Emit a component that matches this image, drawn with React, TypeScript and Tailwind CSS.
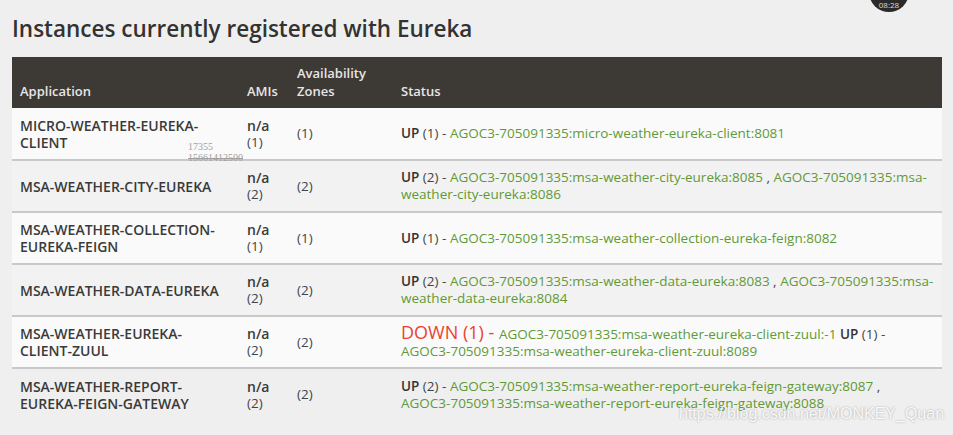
import React from 'react'

const GREEN = 'text-[#5f9a36]'

type Row = {
  app: string[]
  amis: string
  zones: string
  status: React.ReactNode
}

function Up({ n }: { n: number }) {
  return (
    <>
      <b className="font-semibold text-[#333]">UP</b> ({n}) -{' '}
    </>
  )
}

const rows: Row[] = [
  {
    app: ['MICRO-WEATHER-EUREKA-', 'CLIENT'],
    amis: '(1)',
    zones: '(1)',
    status: (
      <>
        <Up n={1} />
        <span className={GREEN}>AGOC3-705091335:micro-weather-eureka-client:8081</span>
      </>
    ),
  },
  {
    app: ['MSA-WEATHER-CITY-EUREKA'],
    amis: '(2)',
    zones: '(2)',
    status: (
      <>
        <Up n={2} />
        <span className={GREEN}>AGOC3-705091335:msa-weather-city-eureka:8085</span> ,{' '}
        <span className={GREEN}>AGOC3-705091335:msa-weather-city-eureka:8086</span>
      </>
    ),
  },
  {
    app: ['MSA-WEATHER-COLLECTION-', 'EUREKA-FEIGN'],
    amis: '(1)',
    zones: '(1)',
    status: (
      <>
        <Up n={1} />
        <span className={GREEN}>AGOC3-705091335:msa-weather-collection-eureka-feign:8082</span>
      </>
    ),
  },
  {
    app: ['MSA-WEATHER-DATA-EUREKA'],
    amis: '(2)',
    zones: '(2)',
    status: (
      <>
        <Up n={2} />
        <span className={GREEN}>AGOC3-705091335:msa-weather-data-eureka:8083</span> ,{' '}
        <span className={GREEN}>AGOC3-705091335:msa-weather-data-eureka:8084</span>
      </>
    ),
  },
  {
    app: ['MSA-WEATHER-EUREKA-', 'CLIENT-ZUUL'],
    amis: '(2)',
    zones: '(2)',
    status: (
      <>
        <span className="text-[18px] leading-[17px] text-[#e8432e]">DOWN (1) - </span>
        <span className={GREEN}>AGOC3-705091335:msa-weather-eureka-client-zuul:-1</span>{' '}
        <Up n={1} />
        <span className={GREEN}>AGOC3-705091335:msa-weather-eureka-client-zuul:8089</span>
      </>
    ),
  },
  {
    app: ['MSA-WEATHER-REPORT-', 'EUREKA-FEIGN-GATEWAY'],
    amis: '(2)',
    zones: '(2)',
    status: (
      <>
        <Up n={2} />
        <span className={GREEN}>AGOC3-705091335:msa-weather-report-eureka-feign-gateway:8087</span> ,{' '}
        <span className={GREEN + ' whitespace-nowrap'}>
          AGOC3-705091335:msa-weather-report-eureka-feign-gateway:8088
        </span>
      </>
    ),
  },
]

export default function App() {
  return (
    <div
      className="relative h-[435px] w-[953px] overflow-hidden bg-[#efefef] text-[13.5px] text-[#444]"
      style={{ fontFamily: '"Open Sans", "Liberation Sans", sans-serif' }}
    >
      {/* timer badge */}
      <div className="absolute left-[869px] top-[-28px] flex h-[40px] w-[40px] items-end justify-center rounded-full bg-[#2a2a2a] pb-[2px] text-[8px] leading-[10px] text-[#ddd]">
        08:28
      </div>

      <h1 className="px-3 pt-[16px] text-[22.5px] font-semibold leading-[26px] text-[#333]">
        Instances currently registered with Eureka
      </h1>

      <table className="ml-3 mt-[15px] w-[930px] border-collapse">
        <thead>
          <tr className="h-[51px] bg-[#3d3934] text-left align-bottom text-[13px] leading-[18px] text-[#e6e6e6]">
            <th className="w-[227px] px-2 pb-[8px] font-semibold">Application</th>
            <th className="w-[50px] px-2 pb-[8px] font-semibold">AMIs</th>
            <th className="w-[104px] px-2 pb-[8px] font-semibold">
              Availability
              <br />
              Zones
            </th>
            <th className="px-2 pb-[8px] font-semibold">Status</th>
          </tr>
        </thead>
        <tbody>
          {rows.map((r, i) => (
            <tr
              key={i}
              className={
                'h-[52px] align-middle leading-[17px] ' +
                (i === 5
                  ? 'bg-[#efefef]'
                  : i % 2 === 0
                    ? 'border-b-2 border-[#c9c9c9] bg-[#fafafa]'
                    : 'border-b-2 border-[#c9c9c9] bg-[#f2f2f2]')
              }
            >
              <td className="px-2 text-[14px] font-semibold text-[#3a3a3a]">
                {r.app.map((l, k) => (
                  <div key={k}>{l}</div>
                ))}
              </td>
              <td className="px-2">
                <div className="text-[14px] font-semibold text-[#3a3a3a]">n/a</div>
                <div>{r.amis}</div>
              </td>
              <td className="px-2">{r.zones}</td>
              <td className="pl-2 pr-1">{r.status}</td>
            </tr>
          ))}
        </tbody>
      </table>

      {/* stray overlay digits */}
      <div
        className="absolute left-[188px] top-[141px] text-[10px] leading-[11px] text-[#a0a0a0]"
        style={{ fontFamily: '"Liberation Serif", serif' }}
      >
        <div>17355</div>
        <div className="line-through">15661412500</div>
      </div>

      {/* csdn watermark */}
      <div
        className="absolute left-[679px] top-[402px] text-[16px] text-white/90 [text-shadow:0_0_2px_rgba(0,0,0,0.35)]"
        style={{ fontFamily: '"Liberation Sans", sans-serif' }}
      >
        https://blog.csdn.net/MONKEY_Quan
      </div>
    </div>
  )
}
